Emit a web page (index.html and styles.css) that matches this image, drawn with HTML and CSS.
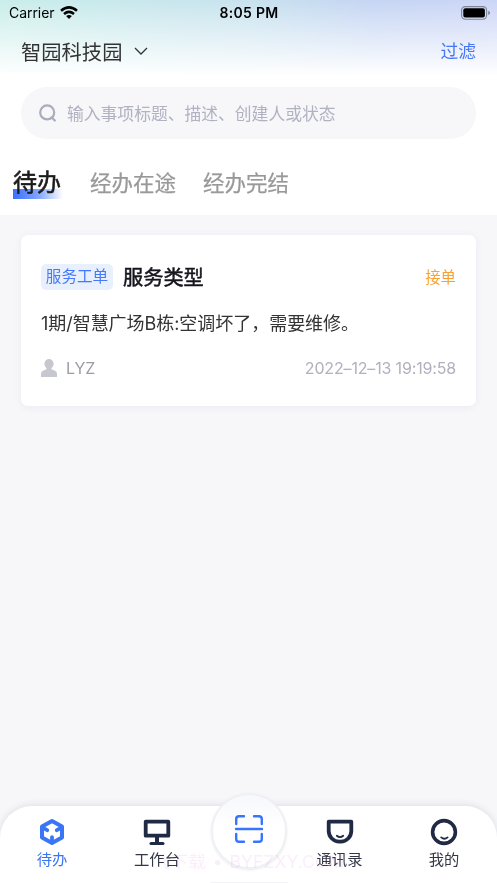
FILE: index.html
```html
<!DOCTYPE html>
<html lang="zh-CN">
<head>
<meta charset="utf-8">
<meta name="viewport" content="width=device-width, initial-scale=1">
<title>待办</title>
<link rel="stylesheet" href="styles.css">
</head>
<body>
<div class="app">
  <header class="top">
    <div class="status">
      <div class="carrier"><span>Carrier</span>
        <svg width="18" height="13" viewBox="0 0 18 13" fill="none" stroke="#000" stroke-width="2.5"><path d="M1 4.8Q9-2 17 4.8M4 8Q9 3.8 14 8"/><path d="M9 13 6.1 10.1Q9 7.8 11.9 10.1Z" fill="#000" stroke="none"/></svg>
      </div>
      <div class="clock">8:05 PM</div>
      <svg class="battery" width="29" height="14" viewBox="0 0 29 14"><rect x=".6" y=".6" width="25" height="12.6" rx="3.6" fill="none" stroke="#7c8599" stroke-width="1.1"/><rect x="2.3" y="2.3" width="21.6" height="9.2" rx="2" fill="#000"/><path d="M27.2 4.7Q29 5.3 29 7T27.2 9.1Z" fill="#7c8599"/></svg>
    </div>
    <div class="location">
      <button class="park">智园科技园<svg width="14" height="9" viewBox="0 0 14 9" fill="none" stroke="#333" stroke-width="1.3"><path d="m1 1 6 6 6-6"/></svg></button>
      <button class="filter">过滤</button>
    </div>
    <div class="search">
      <svg width="18" height="18" viewBox="0 0 18 18" fill="none" stroke="#a9adbd" stroke-width="2.2"><circle cx="8.2" cy="8.4" r="7"/><path d="m12.6 13.3 3.2 3.2" stroke-linecap="round"/></svg>
      <span>输入事项标题、描述、创建人或状态</span>
    </div>
    <nav class="tabs"><span class="tab active">待办</span><span class="tab">经办在途</span><span class="tab">经办完结</span></nav>
  </header>
  <main>
    <article class="card">
      <div class="head"><span class="tag">服务工单</span><h2>服务类型</h2><span class="action">接单</span></div>
      <p class="desc">1期/智慧广场B栋:空调坏了，需要维修。</p>
      <div class="meta">
        <svg width="16" height="18" viewBox="0 0 16 18" fill="#c6c7cf"><ellipse cx="8" cy="4.9" rx="4.6" ry="4.9"/><path d="M5.5 8h5v2.2l3.5 1.5Q16 12.6 16 15v3H0v-3q0-2.4 2-3.3l3.5-1.5Z"/></svg>
        <span class="user">LYZ</span><time>2022–12–13 19:19:58</time>
      </div>
    </article>
  </main>
  <footer class="bar">
    <div class="watermark">飞下载 • BYFZXY.COM</div>
    <a class="item current"><svg width="26" height="28" viewBox="0 0 26 28"><path fill="#fff" stroke="#3a75f6" stroke-width="4" stroke-linejoin="round" d="m13 3 10 5.6v10.8L13 25 3 19.4V8.6Z"/><path d="m4 9.8 4.2 2.4M22 9.8l-4.2 2.4M13 19.2V24" fill="none" stroke="#3a75f6" stroke-width="3.8" stroke-linecap="round"/></svg><span>待办</span></a>
    <a class="item"><svg width="28" height="28" viewBox="0 0 28 28" fill="none" stroke="#202a44"><path d="M2.7 3.7h22.6v14H2.7Z" stroke-width="3.8" stroke-linejoin="round"/><path d="M14 18v7" stroke-width="4"/><path d="M8 25.4h12" stroke-width="3" stroke-linecap="round"/></svg><span>工作台</span></a>
    <a class="scan"><svg width="30" height="30" viewBox="0 0 30 30" fill="none" stroke="#3875ff" stroke-width="2.4" stroke-linecap="round"><path d="M2.2 10V5q0-2.8 2.8-2.8h5M20 2.2h5q2.8 0 2.8 2.8v5M27.8 20v5q0 2.8-2.8 2.8h-5M10 27.8H5q-2.8 0-2.8-2.8v-5M2 15h26"/></svg></a>
    <a class="item"><svg width="28" height="28" viewBox="0 0 28 28" fill="none" stroke="#202a44"><path d="M2.7 3.7h22.6V13a10.6 10.6 0 0 1-10.6 10.6h-1.4A10.6 10.6 0 0 1 2.7 13Z" stroke-width="3.8" stroke-linejoin="round"/><path d="M10.8 17.8q3.2 2.6 6.4 0" stroke-width="1.8" stroke-linecap="round"/></svg><span>通讯录</span></a>
    <a class="item"><svg width="28" height="28" viewBox="0 0 28 28" fill="none" stroke="#202a44"><circle cx="14" cy="14" r="11.4" stroke-width="3.6"/><path d="M11.2 19.4q3.2 2.6 6.4 0" stroke-width="1.8" stroke-linecap="round"/></svg><span>我的</span></a>
    <i class="home"></i>
  </footer>
</div>
</body>
</html>
```
FILE: styles.css
```css
* { box-sizing: border-box; }
body { margin: 0; font-family: Inter, "Noto Sans CJK SC", sans-serif; background: #f7f7fa; }
button { border: 0; padding: 0; background: none; font: inherit; }
svg { display: block; flex: none; }
span, h2, time, button { white-space: nowrap; }
.app { height: 883px; display: flex; flex-direction: column; overflow: hidden; }
.top { height: 215px; flex: none; background: linear-gradient(180deg, rgba(255, 255, 255, 0), #fff 76px), linear-gradient(90deg, #c9eeea 0, #c8e2ee 50%, #c5d5f3 75%, #ccd5f7 100%); }
.status { height: 26px; padding: 0 7px 0 9px; display: grid; grid-template-columns: 1fr auto 1fr; align-items: center; font-size: 14px; line-height: 26px; }
.carrier { display: flex; align-items: center; gap: 5px; letter-spacing: -.05px; }
.carrier svg { margin-top: -1px; }
.clock { font-weight: 600; letter-spacing: .3px; margin-right: 1px; }
.battery { justify-self: end; margin-top: -1px; }
.location { height: 50px; padding: 0 21px; display: flex; justify-content: space-between; align-items: center; }
.park { display: flex; align-items: center; gap: 12px; color: #333; font-size: 20.3px; }
.filter { color: #4577f5; font-size: 17.8px; margin-top: -3px; }
.search { height: 52px; margin: 11px 21px 0; border-radius: 26px; background: #f7f7fa; display: flex; align-items: center; padding-left: 18px; gap: 10px; color: #b0b2c2; font-size: 16.8px; }
.search span { margin-top: -1px; }
.tabs { display: flex; align-items: center; height: 76px; padding: 11px 0 0 13px; gap: 27px; color: #999; font-size: 21.5px; line-height: 32px; }
.tab { -webkit-text-stroke: .25px; }
.active { width: 50px; color: #1b1b1b; font-size: 24px; -webkit-text-stroke: .55px #1b1b1b; background: linear-gradient(90deg, #3970ff, #80a4ff 50%, #fff) 0 100% / 100% 10px no-repeat; }
main { flex: 1; padding: 20px 21px; }
.card { height: 171px; background: #fff; border-radius: 7px; padding: 28px 20px 0; box-shadow: 0 1px 7px #e9eaf1; }
.head { height: 27px; display: flex; align-items: center; }
.tag { width: 72px; height: 26px; border-radius: 5px; background: #e8effd; color: #4479ff; font-size: 15.6px; line-height: 25px; text-align: center; }
h2 { margin: 2px 0 0 10px; font-size: 20.2px; font-weight: 400; line-height: 28px; color: #15151d; -webkit-text-stroke: .5px; }
.action { margin: -2px 0 0 auto; color: #faa12f; font-size: 15.4px; }
.desc { margin: 20px 0 0; font-size: 18px; line-height: 28px; color: #333; white-space: nowrap; letter-spacing: -.04px; }
.meta { margin-top: 18px; height: 24px; display: flex; align-items: center; color: #9b9ca4; font-size: 16px; }
.user { margin-left: 9px; }
time { margin-left: auto; color: #b0b1be; letter-spacing: -.16px; }
.bar { position: relative; height: 77px; display: grid; grid-template-columns: 104px 106px 78px 103px 106px; background: #fff; border-radius: 32px 32px 0 0; box-shadow: 0 -1px 7px #dddee4; }
.item { display: flex; flex-direction: column; align-items: center; padding-top: 12px; gap: 2px; color: #333746; font-size: 15.3px; line-height: 24px; }
.current { color: #3a75f6; }
.scan { width: 76px; height: 76px; margin: -13px 0 0 1px; border: 2px solid #eff0f4; border-radius: 50%; display: grid; place-items: center; background: linear-gradient(#f7f8fc, #fff 45%); box-shadow: 0 1px 3px #e8e9ed; }
.scan svg { margin-top: -4px; }
.watermark { position: absolute; left: 153px; top: 43px; z-index: 1; color: #fbeefb; font-size: 17.6px; line-height: 26px; word-spacing: 2px; white-space: nowrap; mix-blend-mode: multiply; }
.home { position: absolute; left: 210px; bottom: 0; width: 78px; height: 1px; background: #f3f3f5; }
```
